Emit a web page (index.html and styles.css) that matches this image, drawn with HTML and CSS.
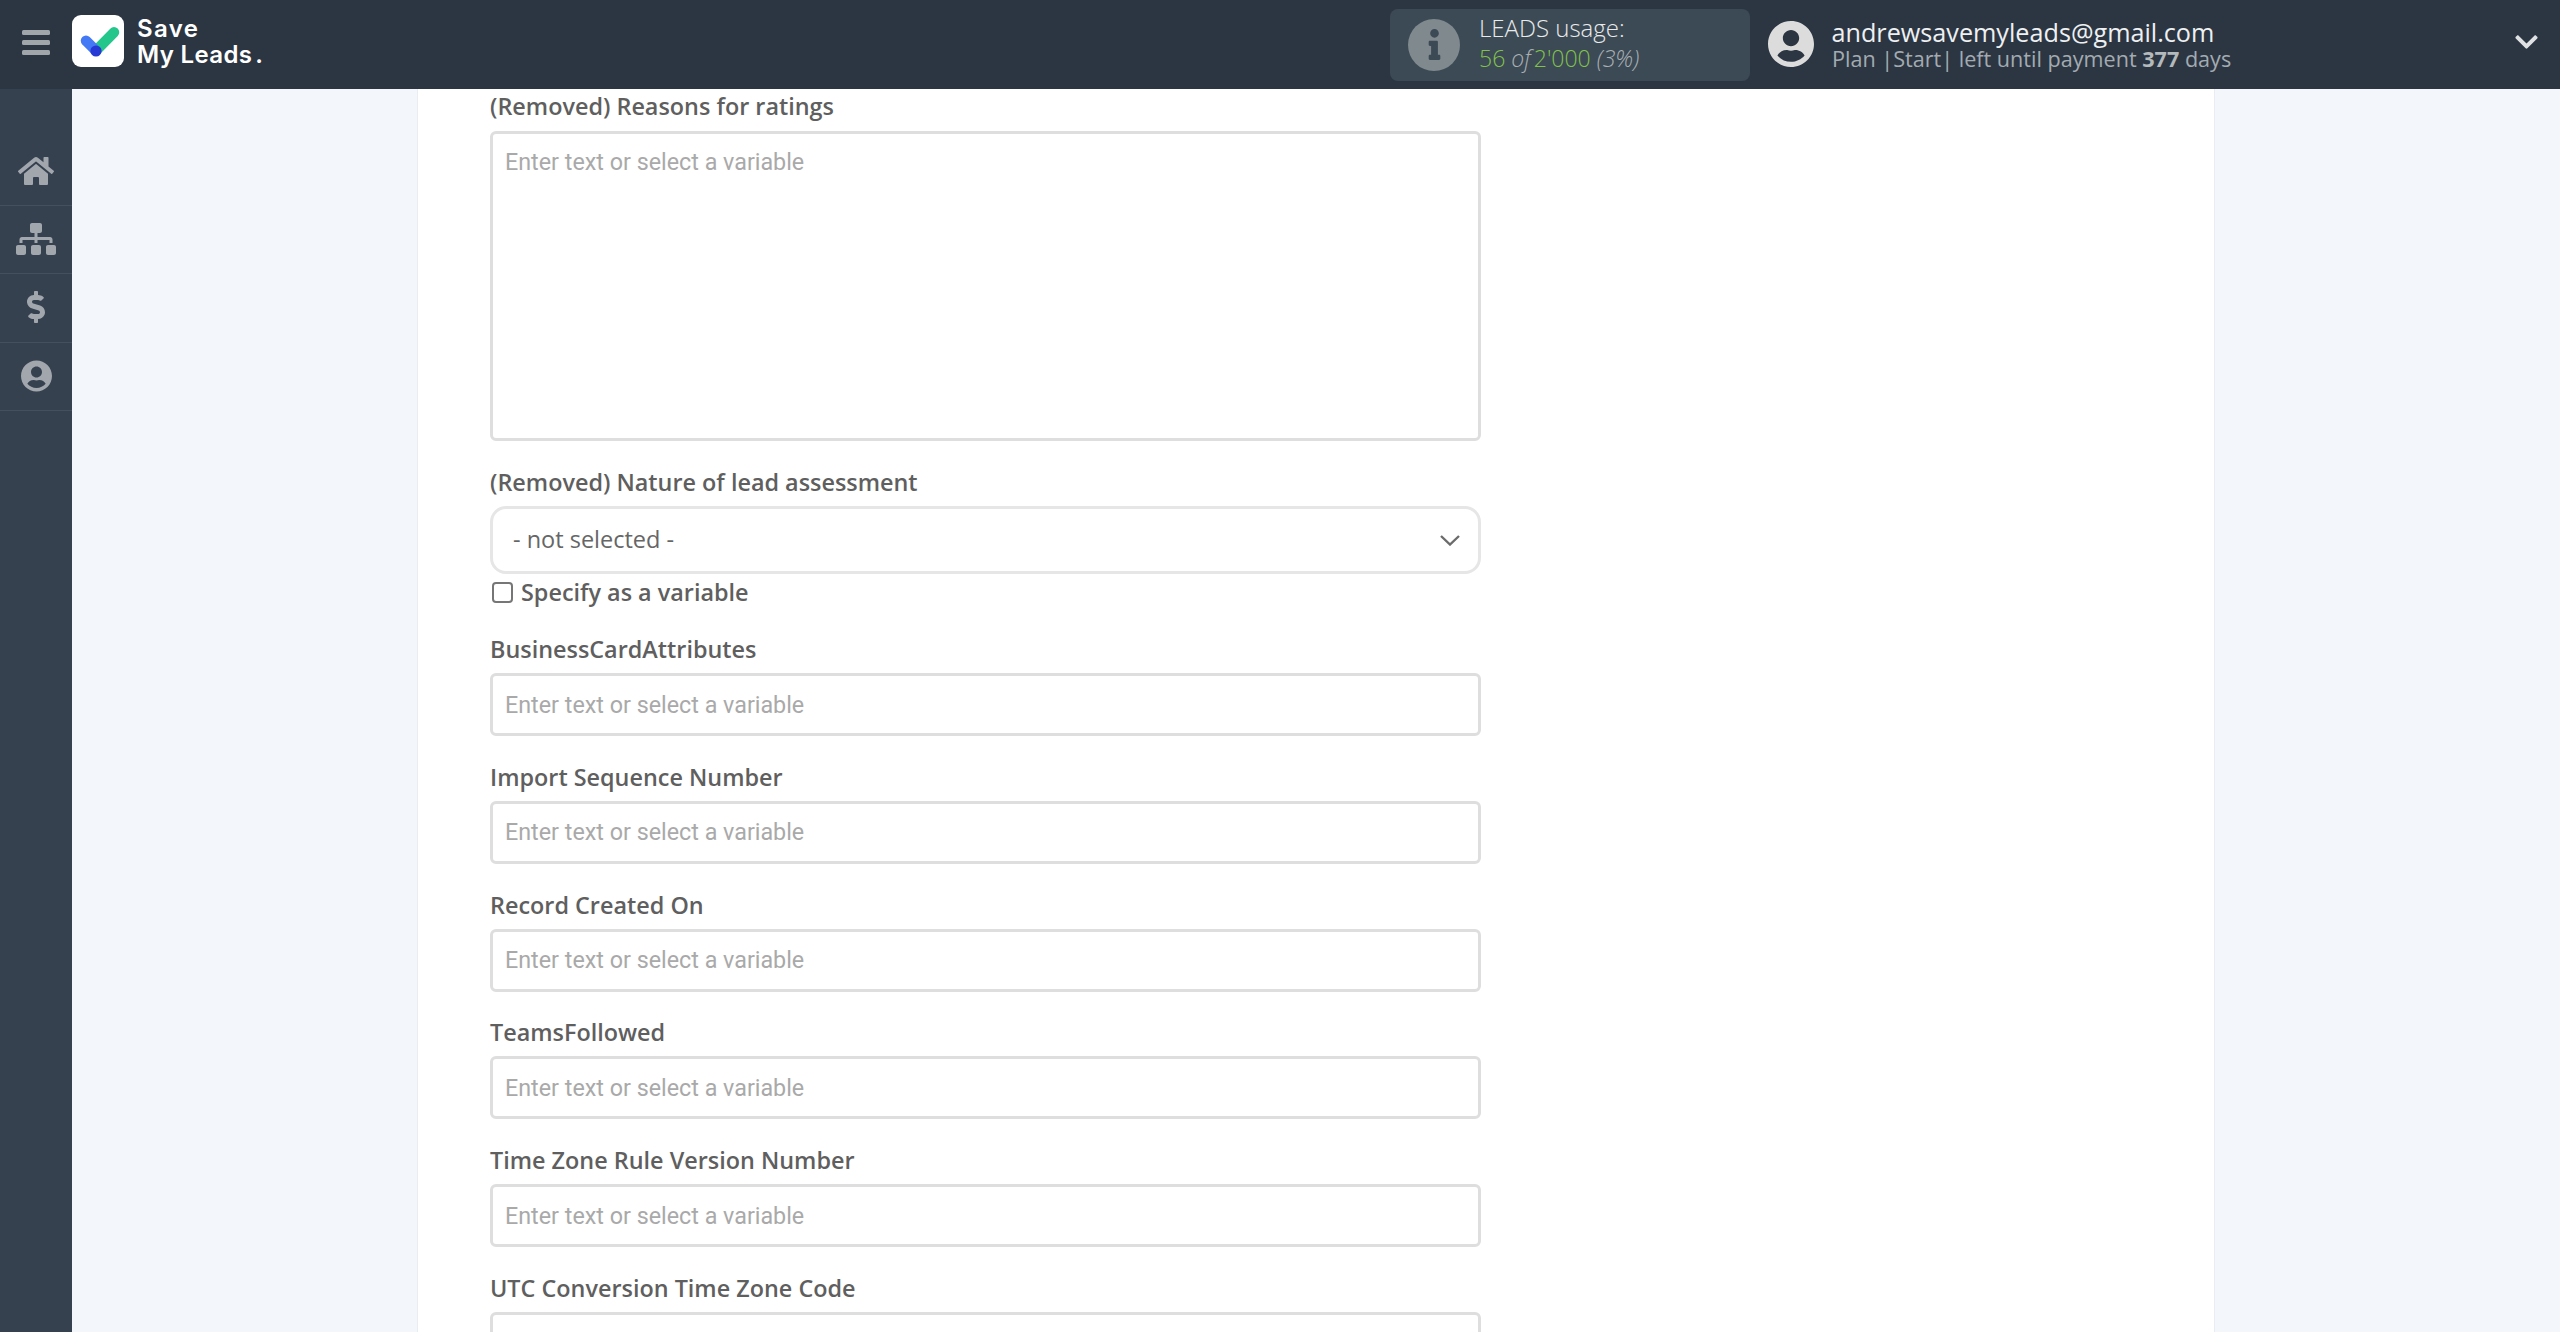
FILE: index.html
```html
<!DOCTYPE html>
<html lang="en">
<head>
<meta charset="utf-8">
<title>Save My Leads</title>
<link rel="stylesheet" href="styles.css">
</head>
<body>
<header class="topbar">
  <button class="burger" type="button" aria-label="Menu"><span></span><span></span><span></span></button>
  <div class="logo">
    <svg class="logo-mark" viewBox="0 0 52 52" aria-hidden="true">
      <rect width="52" height="52" rx="9" fill="#fff"/>
      <path d="M24 35.7 42 17.3" stroke="#25c68c" stroke-width="10.5" stroke-linecap="round" fill="none"/>
      <path d="M14 25.7 24 35.7" stroke="#4479f5" stroke-width="10.5" stroke-linecap="round" fill="none"/>
      <circle cx="24" cy="36" r="5.6" fill="#2639d4"/>
    </svg>
    <div class="logo-text"><span class="logo-save">Save</span><br>My Leads<span class="logo-dot">.</span></div>
  </div>
  <div class="usage">
    <span class="usage-icon">
      <svg viewBox="0 0 192 512" aria-hidden="true"><path d="M20 424.229h20V279.771H20c-11.046 0-20-8.954-20-20V212c0-11.046 8.954-20 20-20h112c11.046 0 20 8.954 20 20v212.229h20c11.046 0 20 8.954 20 20V492c0 11.046-8.954 20-20 20H20c-11.046 0-20-8.954-20-20v-47.771c0-11.046 8.954-20 20-20zM96 0C56.235 0 24 32.235 24 72s32.235 72 72 72 72-32.235 72-72S135.764 0 96 0z"/></svg>
    </span>
    <div class="usage-text">
      <div class="usage-title">LEADS usage:</div>
      <div class="usage-count"><span class="green">56</span> <em class="usage-of">of</em><span class="green">2'000</span> <em>(3%)</em></div>
    </div>
  </div>
  <div class="account">
    <svg class="account-icon" viewBox="0 0 496 512" aria-hidden="true"><path d="M248 8C111 8 0 119 0 256s111 248 248 248 248-111 248-248S385 8 248 8zm0 96c48.6 0 88 39.4 88 88s-39.4 88-88 88-88-39.4-88-88 39.4-88 88-88zm0 344c-58.7 0-111.3-26.6-146.5-68.2 18.8-35.4 55.6-59.8 98.5-59.8 2.4 0 4.8.4 7.1 1.1 13 4.2 26.6 6.9 40.9 6.9 14.3 0 28-2.7 40.9-6.9 2.3-.7 4.7-1.1 7.1-1.1 42.9 0 79.7 24.4 98.5 59.8C359.3 421.4 306.7 448 248 448z"/></svg>
    <div class="account-text">
      <div class="account-mail">andrewsavemyleads@gmail.com</div>
      <div class="account-plan">Plan |Start| left until payment <b>377</b> days</div>
    </div>
  </div>
  <svg class="account-caret" viewBox="0 0 448 512" aria-hidden="true"><path d="M207.029 381.476L12.686 187.132c-9.373-9.373-9.373-24.569 0-33.941l22.667-22.667c9.357-9.357 24.522-9.375 33.901-.04L224 284.505l154.745-154.021c9.379-9.335 24.544-9.317 33.901.04l22.667 22.667c9.373 9.373 9.373 24.569 0 33.941L240.971 381.476c-9.373 9.372-24.569 9.372-33.942 0z"/></svg>
</header>
<div class="shell">
  <nav class="sidebar">
    <a class="nav-item"><svg class="nav-home" viewBox="0 0 576 512" aria-hidden="true"><path d="M280.37 148.26L96 300.11V464a16 16 0 0 0 16 16l112.06-.29a16 16 0 0 0 15.92-16V368a16 16 0 0 1 16-16h64a16 16 0 0 1 16 16v95.64a16 16 0 0 0 16 16.05L464 480a16 16 0 0 0 16-16V300L295.67 148.26a12.19 12.19 0 0 0-15.3 0zM571.6 251.47L488 182.56V44.05a12 12 0 0 0-12-12h-56a12 12 0 0 0-12 12v72.61L318.47 43a48 48 0 0 0-61 0L4.34 251.47a12 12 0 0 0-1.6 16.9l25.5 31A12 12 0 0 0 45.15 301l235.22-193.74a12.19 12.19 0 0 1 15.3 0L530.9 301a12 12 0 0 0 16.9-1.6l25.5-31a12 12 0 0 0-1.7-16.93z"/></svg></a>
    <a class="nav-item"><svg class="nav-map" viewBox="0 0 640 512" aria-hidden="true"><path d="M128 352H32c-17.67 0-32 14.33-32 32v96c0 17.67 14.33 32 32 32h96c17.67 0 32-14.33 32-32v-96c0-17.67-14.33-32-32-32zm-24-80h192v48h48v-48h192v48h48v-57.59c0-21.17-17.23-38.41-38.41-38.41H344v-64h40c17.67 0 32-14.33 32-32V32c0-17.67-14.33-32-32-32H256c-17.67 0-32 14.33-32 32v96c0 17.67 14.33 32 32 32h40v64H94.41C73.23 224 56 241.23 56 262.41V320h48v-48zm264 80h-96c-17.67 0-32 14.33-32 32v96c0 17.67 14.33 32 32 32h96c17.67 0 32-14.33 32-32v-96c0-17.67-14.33-32-32-32zm240 0h-96c-17.67 0-32 14.33-32 32v96c0 17.67 14.33 32 32 32h96c17.67 0 32-14.33 32-32v-96c0-17.67-14.33-32-32-32z"/></svg></a>
    <a class="nav-item"><svg class="nav-dollar" viewBox="0 0 288 512" aria-hidden="true"><path d="M209.2 233.4l-108-31.6C88.7 198.2 80 186.5 80 173.5c0-16.3 13.2-29.5 29.5-29.5h66.3c12.2 0 24.2 3.7 34.2 10.5 6.1 4.1 14.3 3.1 19.5-2l34.8-34c7.1-6.9 6.1-18.4-1.8-24.5C238 74.8 207.4 64.1 176 64V16c0-8.8-7.2-16-16-16h-32c-8.8 0-16 7.2-16 16v48h-2.5C45.8 64-5.4 118.7.5 183.6c4.2 46.1 39.4 83.6 83.8 96.6l102.5 30c12.5 3.7 21.2 15.3 21.2 28.3 0 16.3-13.2 29.5-29.5 29.5h-66.3C100 368 88 364.3 78 357.5c-6.1-4.1-14.3-3.1-19.5 2l-34.8 34c-7.1 6.9-6.1 18.4 1.8 24.5 24.5 19.2 55.1 29.9 86.5 30v48c0 8.8 7.2 16 16 16h32c8.8 0 16-7.2 16-16v-48.2c46.6-.9 90.3-28.6 105.7-72.7 21.5-61.6-14.6-124.8-72.5-141.7z"/></svg></a>
    <a class="nav-item"><svg class="nav-user" viewBox="0 0 496 512" aria-hidden="true"><path d="M248 8C111 8 0 119 0 256s111 248 248 248 248-111 248-248S385 8 248 8zm0 96c48.6 0 88 39.4 88 88s-39.4 88-88 88-88-39.4-88-88 39.4-88 88-88zm0 344c-58.7 0-111.3-26.6-146.5-68.2 18.8-35.4 55.6-59.8 98.5-59.8 2.4 0 4.8.4 7.1 1.1 13 4.2 26.6 6.9 40.9 6.9 14.3 0 28-2.7 40.9-6.9 2.3-.7 4.7-1.1 7.1-1.1 42.9 0 79.7 24.4 98.5 59.8C359.3 421.4 306.7 448 248 448z"/></svg></a>
  </nav>
  <main class="content">
    <section class="card">
      <form class="form">
        <div class="field field-area">
          <label class="label">(Removed) Reasons for ratings</label>
          <textarea class="control area" placeholder="Enter text or select a variable"></textarea>
        </div>
        <div class="field field-select">
          <label class="label">(Removed) Nature of lead assessment</label>
          <div class="select-wrap">
            <select class="select"><option>- not selected -</option></select>
            <svg class="select-caret" viewBox="0 0 20 11" aria-hidden="true"><path d="M1 1l9 8.5L19 1" fill="none" stroke="#6b6b6b" stroke-width="2.4"/></svg>
          </div>
          <label class="check"><input class="check-box" type="checkbox"><span>Specify as a variable</span></label>
        </div>
        <div class="field"><label class="label">BusinessCardAttributes</label><input class="control" placeholder="Enter text or select a variable"></div>
        <div class="field"><label class="label">Import Sequence Number</label><input class="control" placeholder="Enter text or select a variable"></div>
        <div class="field"><label class="label">Record Created On</label><input class="control" placeholder="Enter text or select a variable"></div>
        <div class="field"><label class="label">TeamsFollowed</label><input class="control" placeholder="Enter text or select a variable"></div>
        <div class="field"><label class="label">Time Zone Rule Version Number</label><input class="control" placeholder="Enter text or select a variable"></div>
        <div class="field"><label class="label">UTC Conversion Time Zone Code</label><input class="control" placeholder="Enter text or select a variable"></div>
      </form>
    </section>
  </main>
</div>
</body>
</html>
```

FILE: styles.css
```css
* { box-sizing: border-box; }
html, body { height: 100%; }
body {
  margin: 0;
  height: 1332px;
  overflow: hidden;
  font-family: "Open Sans", sans-serif;
  background: #f3f6fb;
}

/* top bar */
.topbar {
  height: 89px;
  background: #2c3643;
  display: flex;
  align-items: center;
}
.burger {
  width: 72px;
  height: 84px;
  margin: 0 0 5px;
  flex: none;
  padding: 0 22px 0;
  background: none;
  border: 0;
  display: flex;
  flex-direction: column;
  justify-content: center;
  gap: 5px;
}
.burger span {
  display: block;
  height: 5px;
  width: 28px;
  border-radius: 1.5px;
  background: #a1a6aa;
}
.logo {
  display: flex;
  align-items: center;
  gap: 14px;
  width: 1318px;
  flex: none;
  margin-bottom: 7px;
}
.logo-mark { width: 52px; height: 52px; display: block; flex: none; }
.logo-text {
  font-family: Inter, sans-serif;
  font-weight: 600;
  font-size: 24px;
  line-height: 26px;
  color: #fff;
  letter-spacing: 0.35px;
  margin: 0 0 -1px -1px;
}
.logo-save { letter-spacing: 1.4px; }
.logo-dot { margin-left: 3px; }

.usage {
  width: 360px;
  height: 72px;
  flex: none;
  border-radius: 8px;
  background: #3c4a55;
  display: flex;
  align-items: center;
  padding-left: 18px;
  gap: 19px;
}
.usage-icon {
  width: 52px;
  height: 52px;
  flex: none;
  border-radius: 50%;
  background: #7f898e;
  display: flex;
  align-items: center;
  justify-content: center;
}
.usage-icon svg { width: 13px; height: 31px; fill: #3c4a55; display: block; }
.usage-text { line-height: 30px; font-weight: 300; margin-top: -4px; }
.usage-title { color: #e8eaeb; font-size: 24px; }
.usage-count { color: #a9afb3; white-space: nowrap; font-size: 23px; }
.usage-count .green { color: #82c24a; }
.usage-of { margin-right: 3px; }

.account {
  display: flex;
  align-items: center;
  margin-left: 18px;
  gap: 18px;
  flex: none;
  width: 740px;
}
.account-icon { width: 46px; height: 48px; fill: #dcdcdc; flex: none; display: block; margin-top: -2px; }
.account-mail { font-size: 25.2px; line-height: 28px; color: #eef0f1; white-space: nowrap; margin-left: -0.5px; }
.account-plan { font-size: 21.6px; line-height: 26px; color: #a3abb1; white-space: nowrap; font-weight: 400; }
.account-plan b { font-weight: 700; color: #b4b9bc; }
.account-caret { width: 23px; height: 26px; fill: #dfe1e2; flex: none; margin: 0 0 5px 7px; }

/* layout below top bar */
.shell { display: flex; height: 1243px; }
.sidebar {
  width: 72px;
  flex: none;
  background: #364150;
  padding-top: 48.5px;
}
.nav-item {
  height: 68.4px;
  display: flex;
  align-items: center;
  justify-content: center;
  border-bottom: 1.5px solid #45505e;
}
.nav-item svg { fill: #a1a7ad; display: block; margin-top: -1px; }
.nav-home { width: 36px; height: 32px; }
.nav-map { width: 40px; height: 32px; }
.nav-dollar { width: 18px; height: 32px; }
.nav-user { width: 31px; height: 32px; }

.content { flex: 1; min-width: 0; overflow: hidden; padding-left: 345px; }
.card {
  width: 1798px;
  height: 100%;
  background: #fff;
  border-left: 1px solid #e9edf3;
  border-right: 1px solid #e9edf3;
  padding: 0 0 0 72px;
}
.form { width: 991px; padding-top: 1px; }

.field { margin-bottom: 24.75px; }
.label {
  display: block;
  height: 33px;
  margin-bottom: 7px;
  font-size: 23.4px;
  line-height: 33px;
  font-weight: 600;
  color: #5f5f5f;
  white-space: nowrap;
}
.control {
  display: block;
  width: 100%;
  height: 63px;
  padding: 0 12px;
  margin: 0;
  background: #fff;
  border: 3px solid #dedede;
  border-radius: 6px;
  font-family: Roboto, sans-serif;
  font-size: 23.3px;
  color: #555;
  outline: none;
  resize: none;
}
.control::placeholder { color: #a9a9a9; opacity: 1; }
.area { height: 310px; padding-top: 14px; line-height: 28px; }
.field-area { margin-bottom: 25px; }
.field-area .label { margin-bottom: 8px; }
.field-select { margin-bottom: 21px; }
.field-select .label { margin-bottom: 6.5px; }

.select-wrap { position: relative; height: 68px; }
.select {
  display: block;
  width: 100%;
  height: 68px;
  padding: 0 20px 2px;
  margin: 0;
  background: #fff;
  border: 3px solid #e6e6e6;
  border-radius: 16px;
  appearance: none;
  -webkit-appearance: none;
  font-family: "Open Sans", sans-serif;
  font-size: 23.5px;
  color: #666;
  outline: none;
}
.select-caret { position: absolute; top: 29px; right: 21px; width: 20px; height: 11px; display: block; }

.check {
  display: flex;
  align-items: center;
  gap: 8px;
  height: 40px;
  margin-top: -1.5px;
  padding-left: 2px;
  font-size: 23.4px;
  font-weight: 600;
  color: #5f5f5f;
}
.check-box {
  appearance: none;
  -webkit-appearance: none;
  width: 21px;
  height: 21px;
  margin: 0;
  background: #fff;
  border: 2px solid #767676;
  border-radius: 4px;
  flex: none;
}
```
